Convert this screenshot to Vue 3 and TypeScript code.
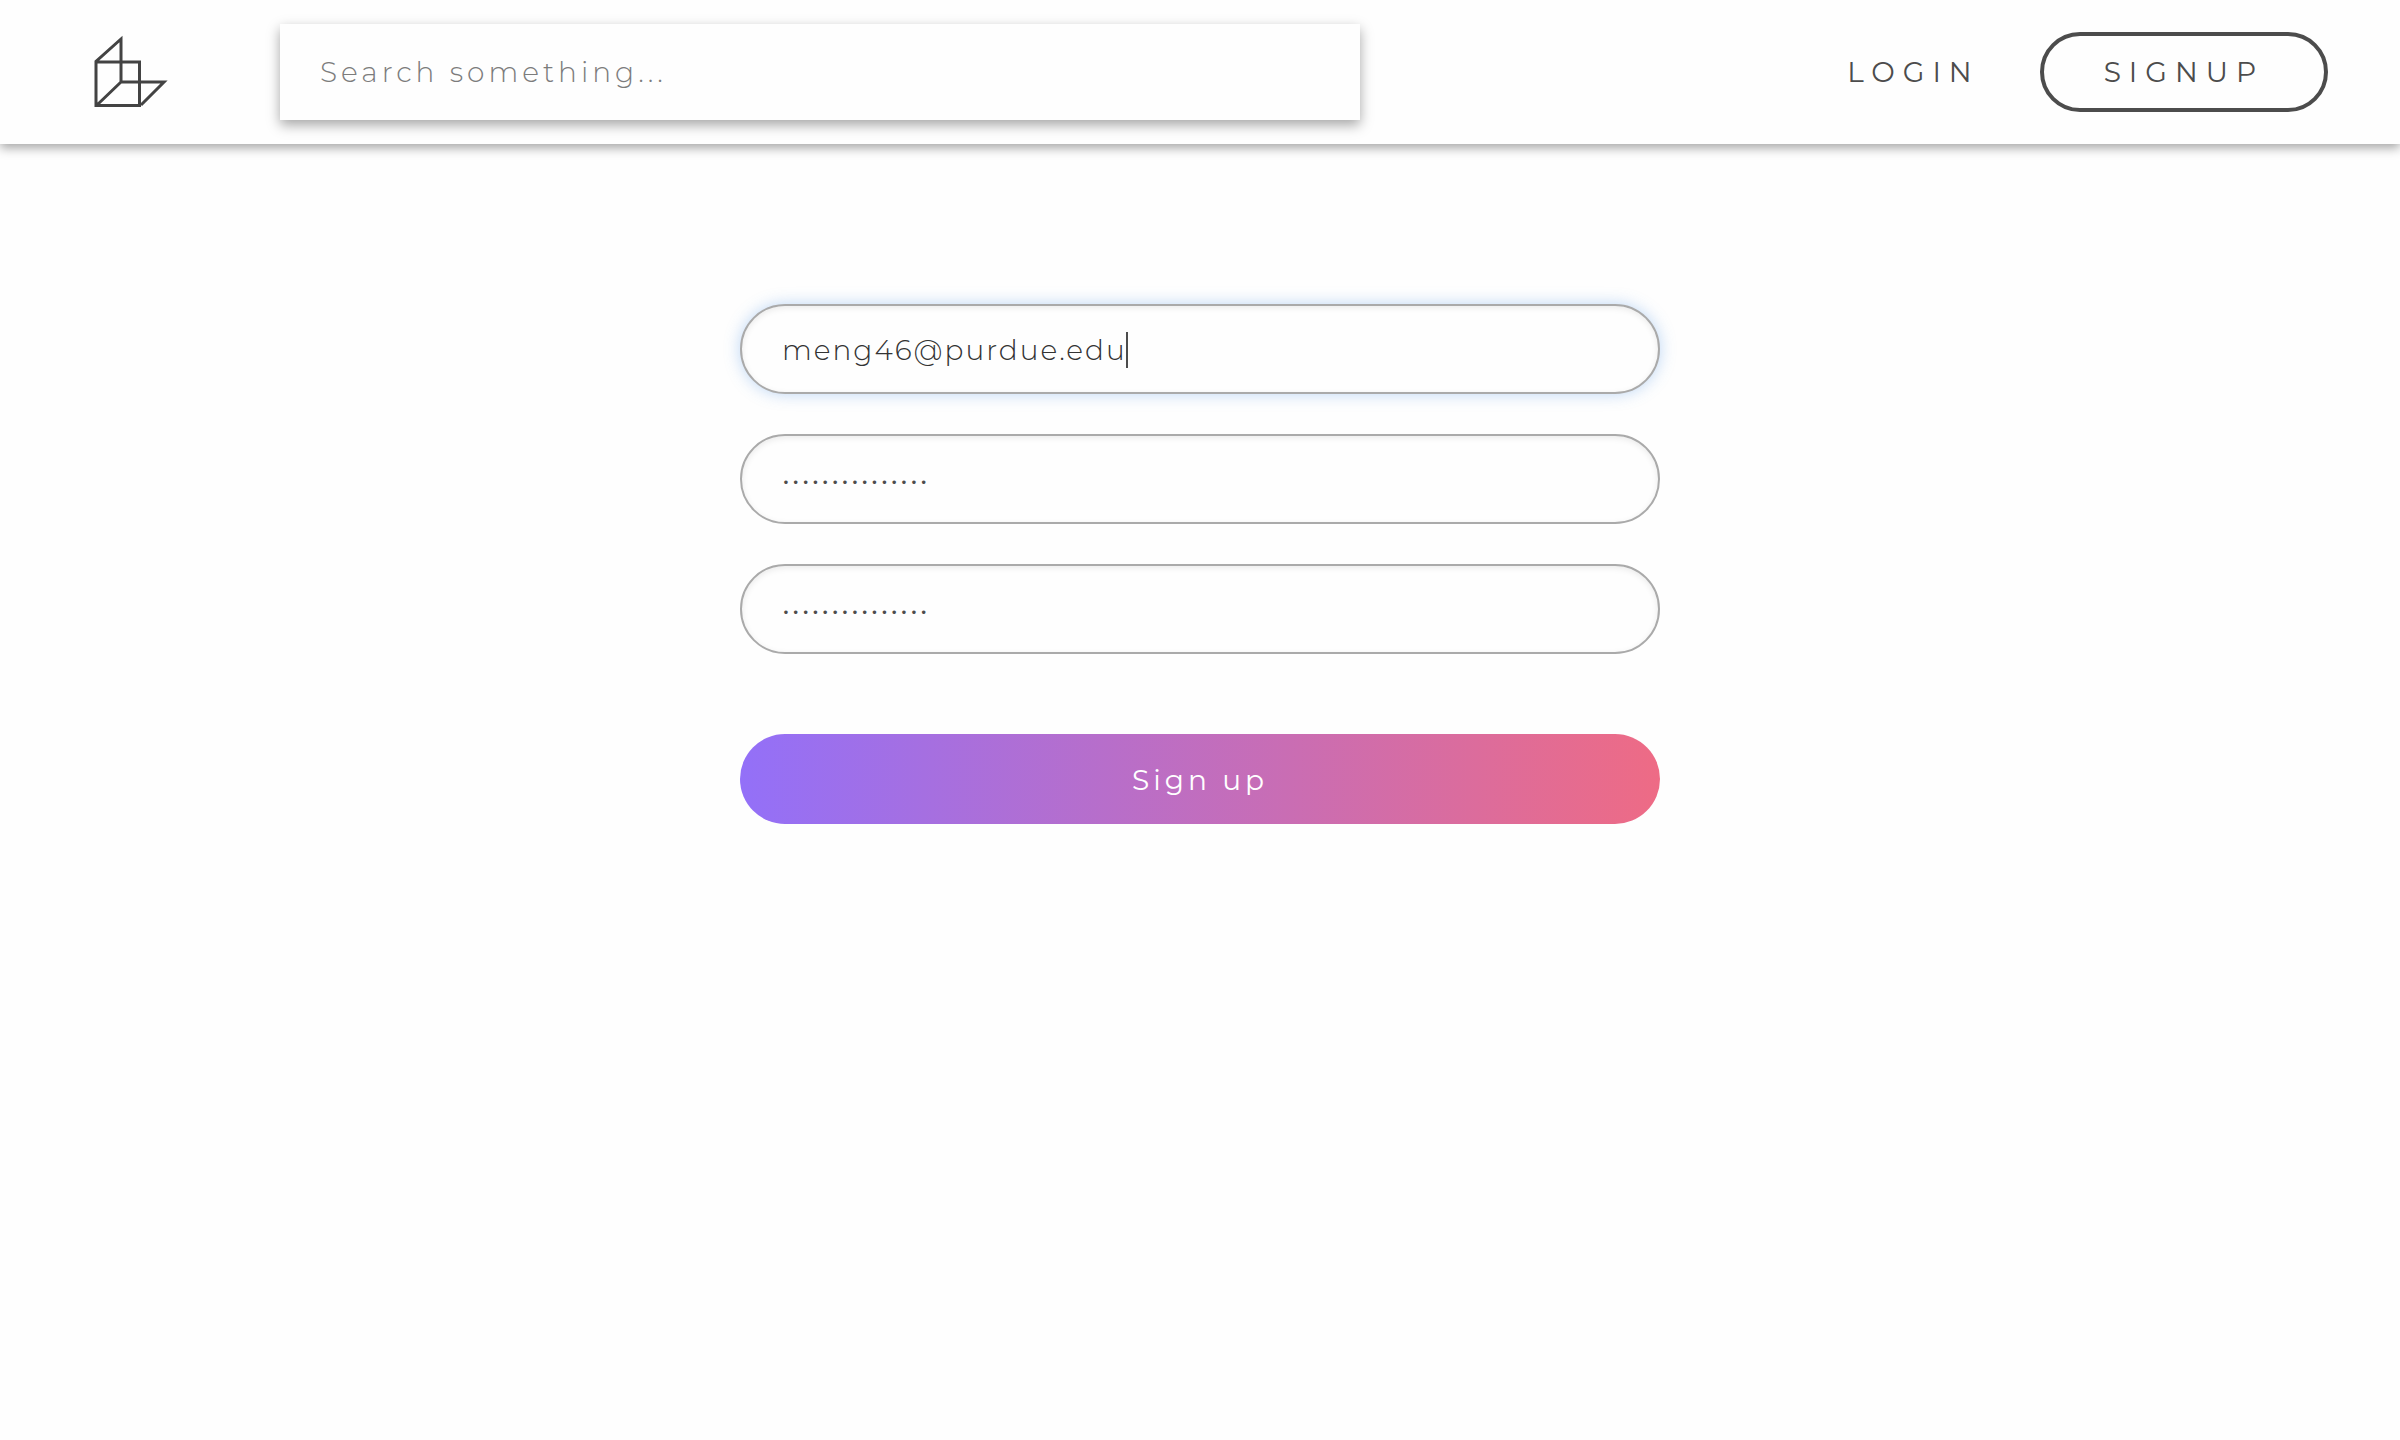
<script setup lang="ts">
import { ref } from 'vue'

const query = ref('')
const email = ref('meng46@purdue.edu')
const password = ref('purduepurdue123')
const confirmation = ref('purduepurdue123')
</script>

<template>
  <div class="page">
    <header class="topbar">
      <a class="logo" href="#" aria-label="Home">
        <svg width="80" height="80" viewBox="0 0 80 80" fill="none" stroke="#434343" stroke-width="3">
          <path d="M8 30H51.5V73.5H8V29.5L33 7V50H76L53 73M33 50L9 73" />
        </svg>
      </a>
      <input v-model="query" class="search" type="search" placeholder="Search something..." aria-label="Search" />
      <nav class="actions">
        <a class="login" href="#">LOGIN</a>
        <button class="signup" type="button">SIGNUP</button>
      </nav>
    </header>

    <main class="content">
      <form class="form" @submit.prevent>
        <label class="field active">
          <input v-model="email" class="email" type="text" aria-label="Email" />
          <span class="caret"></span>
        </label>
        <label class="field">
          <input v-model="password" class="password" type="password" aria-label="Password" />
        </label>
        <label class="field">
          <input v-model="confirmation" class="password" type="password" aria-label="Confirm password" />
        </label>
        <button class="submit" type="submit">Sign up</button>
      </form>
    </main>
  </div>
</template>

<style>
body {
  background: #fefefe;
}
</style>

<style scoped>
.page {
  font-family: Montserrat, Inter, sans-serif;
  font-size: 28px;
  color: #4c4c4c;
}

.topbar {
  display: flex;
  align-items: center;
  height: 144px;
  padding: 0 72px 0 88px;
  background: #fefefe;
  box-shadow: 0 4px 10px rgba(0, 0, 0, 0.35);
}

.logo {
  display: flex;
  margin-right: 112px;
}

.search {
  box-sizing: border-box;
  flex: 0 0 45vw;
  height: 96px;
  padding: 0 40px;
  border: 0;
  background: #fefefe;
  box-shadow: 0 5px 12px rgba(0, 0, 0, 0.35);
  font: inherit;
  font-weight: 300;
  letter-spacing: 4px;
  color: inherit;
  outline: none;
  appearance: none;
}

.search::placeholder {
  color: #7c7c7c;
}

.actions {
  display: flex;
  align-items: center;
  gap: 60px;
  margin-left: auto;
}

.login {
  color: inherit;
  text-decoration: none;
  letter-spacing: 8px;
}

.signup {
  height: 80px;
  padding: 0 60px;
  border: 4px solid #4c4c4c;
  border-radius: 40px;
  background: transparent;
  font: inherit;
  letter-spacing: 8px;
  color: inherit;
}

.content {
  display: flex;
  justify-content: center;
  padding: 160px 40px;
}

.form {
  display: flex;
  flex-direction: column;
  gap: 40px;
  width: 100%;
  max-width: 920px;
}

.field {
  box-sizing: border-box;
  display: flex;
  align-items: center;
  height: 90px;
  padding: 2px 40px 0;
  border: 2px solid #aaa;
  border-radius: 45px;
  background: #fefefe;
  box-shadow: inset 0 2px 6px rgba(0, 0, 0, 0.08);
}

.field.active {
  box-shadow: inset 0 2px 6px rgba(0, 0, 0, 0.08), 0 0 16px rgba(74, 144, 226, 0.36);
}

.email,
.password {
  padding: 0;
  border: 0;
  background: transparent;
  font: inherit;
  font-weight: 300;
  letter-spacing: 2px;
  outline: none;
}

.email {
  field-sizing: content;
  color: #333;
}

.password {
  width: 100%;
  color: #4c4c4c;
}

.caret {
  width: 2px;
  height: 36px;
  margin-left: -1px;
  background: #4c4c4c;
}

.submit {
  height: 90px;
  margin-top: 40px;
  padding: 2px 0 0;
  border: 0;
  border-radius: 45px;
  background: linear-gradient(90deg, #9370f8, #ee6b85);
  font: inherit;
  letter-spacing: 4px;
  color: #fff;
}
</style>
